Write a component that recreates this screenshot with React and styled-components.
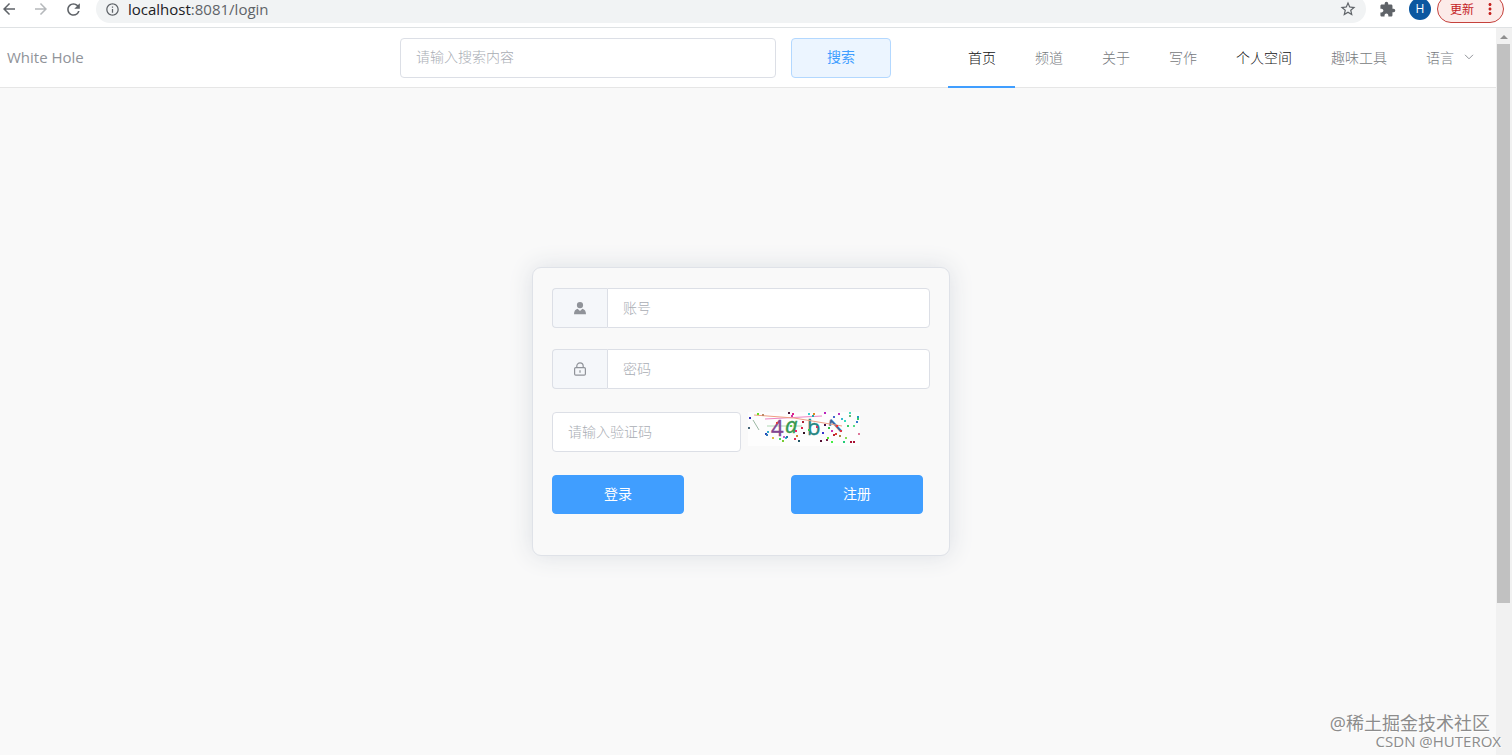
import { useState } from "react";
import styled, { createGlobalStyle } from "styled-components";
import {
  MdArrowBack,
  MdArrowForward,
  MdRefresh,
  MdInfoOutline,
  MdStarBorder,
  MdExtension,
  MdMoreVert,
} from "react-icons/md";

const GlobalStyle = createGlobalStyle`
  * {
    box-sizing: border-box;
  }

  body {
    margin: 0;
    font-family: "Open Sans", "Noto Sans CJK SC", sans-serif;
    font-size: 14px;
    color: #303133;
  }

  button,
  input {
    font: inherit;
  }
`;

const Window = styled.div`
  position: relative;
  display: flex;
  flex-direction: column;
  height: 100vh;
  overflow: hidden;
  background: #fff;
`;

const Toolbar = styled.div`
  flex: none;
  height: 28px;
  overflow: hidden;
  border-bottom: 1px solid #dfe2e4;
`;

const ToolbarRow = styled.div`
  display: flex;
  align-items: center;
  height: 28px;
  margin-top: -5px;
  padding-right: 8px;
`;

const ToolButton = styled.button`
  display: flex;
  align-items: center;
  justify-content: center;
  width: 32px;
  height: 28px;
  padding: 0;
  border: 0;
  background: none;
  color: ${(props) => (props.$muted ? "#b5b8bb" : "#5f6368")};
`;

const HistoryButtons = styled.div`
  display: flex;
  width: 96px;
  margin-left: -7px;
  margin-right: 7px;
`;

const AddressBar = styled.div`
  flex: 1;
  display: flex;
  align-items: center;
  gap: 8px;
  height: 28px;
  margin-right: 5px;
  padding: 0 2px 0 9px;
  border-radius: 14px;
  background: #f1f3f4;
  color: #5f6368;
`;

const Address = styled.a`
  flex: 1;
  font-size: 15px;
  line-height: 20px;
  padding-bottom: 1px;
  color: #5f6368;
  text-decoration: none;

  span {
    color: #202124;
  }
`;

const Avatar = styled.button`
  width: 22px;
  height: 22px;
  margin: 0 6px;
  padding: 0;
  border: 0;
  border-radius: 50%;
  background: #0b57a0;
  color: #fff;
  font-size: 12px;
  line-height: 22px;
`;

const UpdateButton = styled.button`
  display: flex;
  align-items: center;
  justify-content: space-between;
  width: 67px;
  height: 28px;
  padding: 0 4px 0 12px;
  border: 1px solid #c5413c;
  border-radius: 14px;
  background: #fcebe9;
  color: #c5221f;
  font-size: 12px;
`;

const Viewport = styled.div`
  flex: 1;
  display: flex;
  min-height: 0;
`;

const Page = styled.div`
  flex: 1;
  display: flex;
  flex-direction: column;
  min-width: 0;
  background: #f9f9f9;
`;

const Header = styled.header`
  display: flex;
  align-items: center;
  height: 60px;
  padding: 0 3px 0 7px;
  border-bottom: 1px solid #e6e6e6;
  background: #fff;
`;

const Brand = styled.div`
  flex: 4;
  color: #909399;
  font-size: 15px;
  line-height: 20px;
  padding-bottom: 2px;
`;

const SearchForm = styled.form`
  flex: 5;
  display: flex;
  gap: 15px;
  margin-right: 57px;
`;

const Input = styled.input`
  flex: 1;
  min-width: 0;
  height: 40px;
  padding: 0 15px 2px;
  border: 1px solid #dcdfe6;
  border-radius: ${(props) => (props.$grouped ? "0 4px 4px 0" : "4px")};
  outline: none;
  background: #fff;
  color: #606266;

  &::placeholder {
    color: #a9adb4;
    font-weight: 300;
  }
`;

const Button = styled.button`
  width: 132px;
  height: 39px;
  padding: 0 0 4px;
  border: 1px solid #409eff;
  border-radius: 4px;
  background: #409eff;
  color: #fff;
`;

const SearchButton = styled(Button)`
  width: 100px;
  height: 40px;
  border-color: #b3d8ff;
  background: #ecf5ff;
  color: #409eff;
`;

const Nav = styled.nav`
  display: flex;
  align-self: stretch;
`;

const NavLink = styled.a`
  display: flex;
  align-items: center;
  gap: 10px;
  height: 60px;
  padding: 0 19px 0 20px;
  border-bottom: 2px solid ${(props) => (props.$active ? "#409eff" : "transparent")};
  color: ${(props) => (props.$dark ? "#111214" : "#777a80")};
  font-weight: 300;
  text-decoration: none;
  white-space: nowrap;
`;

const Main = styled.main`
  flex: 1;
  display: flex;
  justify-content: center;
  align-items: flex-start;
  padding: 179px 14px 0 0;
`;

const LoginCard = styled.form`
  width: 418px;
  padding: 20px 19px 41px;
  border: 1px solid #dfe2e8;
  border-radius: 9px;
  background: #f9f9f9;
  box-shadow: 0 0 25px #dcdfe4;
`;

const Field = styled.div`
  display: flex;
  margin-bottom: 21px;
`;

const Prefix = styled.label`
  display: flex;
  align-items: center;
  justify-content: center;
  width: 55px;
  border: 1px solid #dcdfe6;
  border-right: 0;
  border-radius: 4px 0 0 4px;
  background: #f5f7fa;
  color: #909399;
`;

const CaptchaRow = styled.div`
  display: flex;
  gap: 7px;
  margin: 23px 0;
`;

const CaptchaField = styled.div`
  display: flex;
  width: 50%;
`;

const CaptchaButton = styled.button`
  height: 34px;
  padding: 0;
  border: 0;
  background: none;
`;

const Actions = styled.div`
  display: flex;
  justify-content: space-between;
  padding-right: 7px;
`;

const Scrollbar = styled.div`
  display: flex;
  flex-direction: column;
  width: 16px;
  padding: 0 2px 0 1px;
  background: #f1f1f1;

  &::after {
    content: "";
    flex: 3;
  }
`;

const ScrollThumb = styled.div`
  flex: 11;
  background: #c1c1c1;
`;

const Watermark = styled.div`
  position: absolute;
  right: 11px;
  bottom: 5px;
  text-align: right;
  color: #8c8c8c;
  text-shadow: 1px 1px 1px #fff;
  line-height: 18px;
  pointer-events: none;
`;

const WatermarkLine = styled.div`
  margin-right: ${(props) => (props.$small ? "0" : "11px")};
  font-size: ${(props) => (props.$small ? "15px" : "18px")};
`;

const navItems = [
  { label: "首页", active: true, dark: true },
  { label: "频道" },
  { label: "关于" },
  { label: "写作" },
  { label: "个人空间", dark: true },
  { label: "趣味工具" },
  { label: "语言", submenu: true },
];

// x, y, color
const captchaDots = [
  [9, 1, "#6d2"], [1, 5, "#33b"], [14, 2, "#b86"], [0, 15, "#467"],
  [40, 0, "#413"], [44, 1, "#d28"], [43, 3, "#c3a"], [65, 1, "#d82"],
  [64, 3, "#2aa"], [60, 1, "#3cc"], [76, 0, "#b2b"], [90, 1, "#b3b"],
  [101, 0, "#4db"], [101, 3, "#6b7"], [109, 4, "#29b"], [109, 6, "#3c6"],
  [108, 9, "#37c"], [93, 6, "#3bc"], [85, 4, "#46c"], [105, 13, "#5d8"],
  [99, 13, "#3c6"], [96, 8, "#3db"], [54, 9, "#a23"], [53, 15, "#d24"],
  [76, 12, "#414"], [80, 15, "#3b4"], [88, 13, "#e33"], [92, 18, "#d34"],
  [17, 21, "#24b"], [19, 19, "#3ac"], [18, 22, "#37b"], [47, 18, "#e26"],
  [55, 20, "#312"], [60, 17, "#3c4"], [74, 20, "#33c"], [68, 14, "#c36"],
  [24, 25, "#db4"], [31, 26, "#4d6"], [34, 28, "#7c3"], [37, 25, "#3bc"],
  [38, 24, "#27a"], [35, 24, "#b6c"], [46, 26, "#d35"], [48, 23, "#c83"],
  [50, 28, "#256"], [79, 25, "#5e3"], [78, 27, "#724"], [83, 29, "#4e4"],
  [72, 28, "#513"], [85, 22, "#b23"], [87, 21, "#d43"], [91, 23, "#a84"],
  [95, 29, "#2c7"], [97, 25, "#8d5"], [102, 29, "#a13"], [105, 29, "#a13"],
  [110, 21, "#d79"], [83, 18, "#c3a"], [42, 13, "#6c4"], [28, 10, "#d44"],
];

const ChevronIcon = () => (
  <svg width="10" height="6" viewBox="0 0 10 6" fill="none" stroke="#909399">
    <path d="M1 .8 5 4.8 9 .8" />
  </svg>
);

const UserIcon = () => (
  <svg width="14" height="14" viewBox="0 0 14 14" fill="currentColor">
    <ellipse cx="7" cy="4.1" rx="3.1" ry="3.2" />
    <path d="M1 13.2C1 10 2.3 8.3 4.6 7.7L7 10l2.4-2.3c2.3.6 3.6 2.3 3.6 5.5z" />
  </svg>
);

const LockIcon = () => (
  <svg
    width="14"
    height="14"
    viewBox="0 0 14 14"
    fill="none"
    stroke="currentColor"
    strokeWidth="1.2"
  >
    <rect x="1.6" y="5.6" width="10.8" height="7.6" rx="1.2" />
    <path d="M3.8 5.6V4.1a3.2 3.2 0 0 1 6.4 0v1.5M7 8.2v2.6" />
  </svg>
);

const CaptchaImage = () => (
  <svg
    width="112"
    height="34"
    viewBox="0 0 112 34"
    fontFamily="Open Sans, sans-serif"
    fontSize="22"
  >
    <rect width="112" height="34" fill="#fdfdfd" />
    <path d="M5 8 11 18" stroke="#9cb8a4" fill="none" />
    <path d="M19 14H54" stroke="#aed7b3" fill="none" />
    <text x="23" y="24" fill="#824592" stroke="#824592" strokeWidth=".4">4</text>
    <text
      x="37"
      y="21"
      fill="#349851"
      stroke="#349851"
      strokeWidth=".4"
      fontStyle="italic"
    >
      a
    </text>
    <text x="59" y="23" fill="#258582" stroke="#258582" strokeWidth=".4">b</text>
    <text x="88" y="24" fill="#36649b" stroke="#36649b" strokeWidth=".4" rotate="-42">1</text>
    <path d="M17 7 74 4" stroke="#ed83c3" fill="none" />
    <path d="M6 3 46 6 94 14" stroke="#ef9e82" fill="none" />
    {captchaDots.map(([x, y, color]) => (
      <rect key={`${x}-${y}`} x={x} y={y} width="2" height="2" fill={color} />
    ))}
  </svg>
);

const BrowserToolbar = () => {
  return (
    <Toolbar>
      <ToolbarRow>
        <HistoryButtons>
          <ToolButton type="button" aria-label="后退">
            <MdArrowBack size={18} />
          </ToolButton>
          <ToolButton type="button" aria-label="前进" $muted>
            <MdArrowForward size={18} />
          </ToolButton>
          <ToolButton type="button" aria-label="刷新">
            <MdRefresh size={19} />
          </ToolButton>
        </HistoryButtons>
        <AddressBar>
          <MdInfoOutline size={15} />
          <Address href="#login">
            <span>localhost</span>:8081/login
          </Address>
          <ToolButton type="button" aria-label="收藏">
            <MdStarBorder size={18} />
          </ToolButton>
        </AddressBar>
        <ToolButton type="button" aria-label="扩展程序">
          <MdExtension size={17} />
        </ToolButton>
        <Avatar type="button">H</Avatar>
        <UpdateButton type="button">
          更新
          <MdMoreVert size={18} />
        </UpdateButton>
      </ToolbarRow>
    </Toolbar>
  );
};

const SiteHeader = () => {
  const [keyword, setKeyword] = useState("");

  return (
    <Header>
      <Brand>White Hole</Brand>
      <SearchForm onSubmit={(e) => e.preventDefault()}>
        <Input
          type="text"
          aria-label="搜索内容"
          placeholder="请输入搜索内容"
          value={keyword}
          onChange={(e) => setKeyword(e.target.value)}
        />
        <SearchButton type="submit">搜索</SearchButton>
      </SearchForm>
      <Nav>
        {navItems.map((item) => (
          <NavLink key={item.label} href="#" $active={item.active} $dark={item.dark}>
            {item.label}
            {item.submenu && <ChevronIcon />}
          </NavLink>
        ))}
      </Nav>
    </Header>
  );
};

const LoginForm = () => {
  const [form, setForm] = useState({ account: "", password: "", code: "" });

  const handleChange = (e) => {
    setForm({ ...form, [e.target.name]: e.target.value });
  };

  return (
    <LoginCard onSubmit={(e) => e.preventDefault()}>
      <Field>
        <Prefix htmlFor="account" aria-label="账号">
          <UserIcon />
        </Prefix>
        <Input
          $grouped
          id="account"
          name="account"
          type="text"
          placeholder="账号"
          value={form.account}
          onChange={handleChange}
        />
      </Field>
      <Field>
        <Prefix htmlFor="password" aria-label="密码">
          <LockIcon />
        </Prefix>
        <Input
          $grouped
          id="password"
          name="password"
          type="password"
          placeholder="密码"
          value={form.password}
          onChange={handleChange}
        />
      </Field>
      <CaptchaRow>
        <CaptchaField>
          <Input
            name="code"
            type="text"
            aria-label="验证码"
            placeholder="请输入验证码"
            value={form.code}
            onChange={handleChange}
          />
        </CaptchaField>
        <CaptchaButton type="button" aria-label="换一张验证码">
          <CaptchaImage />
        </CaptchaButton>
      </CaptchaRow>
      <Actions>
        <Button type="submit">登录</Button>
        <Button type="button">注册</Button>
      </Actions>
    </LoginCard>
  );
};

const App = () => {
  return (
    <Window>
      <GlobalStyle />
      <BrowserToolbar />
      <Viewport>
        <Page>
          <SiteHeader />
          <Main>
            <LoginForm />
          </Main>
        </Page>
        <Scrollbar>
          <svg width="13" height="16" viewBox="0 0 13 16">
            <path d="M3 11 7 7l4 4z" fill="#8f8f8f" />
          </svg>
          <ScrollThumb />
        </Scrollbar>
      </Viewport>
      <Watermark>
        <WatermarkLine>@稀土掘金技术社区</WatermarkLine>
        <WatermarkLine $small>CSDN @HUTEROX</WatermarkLine>
      </Watermark>
    </Window>
  );
};

export default App;
